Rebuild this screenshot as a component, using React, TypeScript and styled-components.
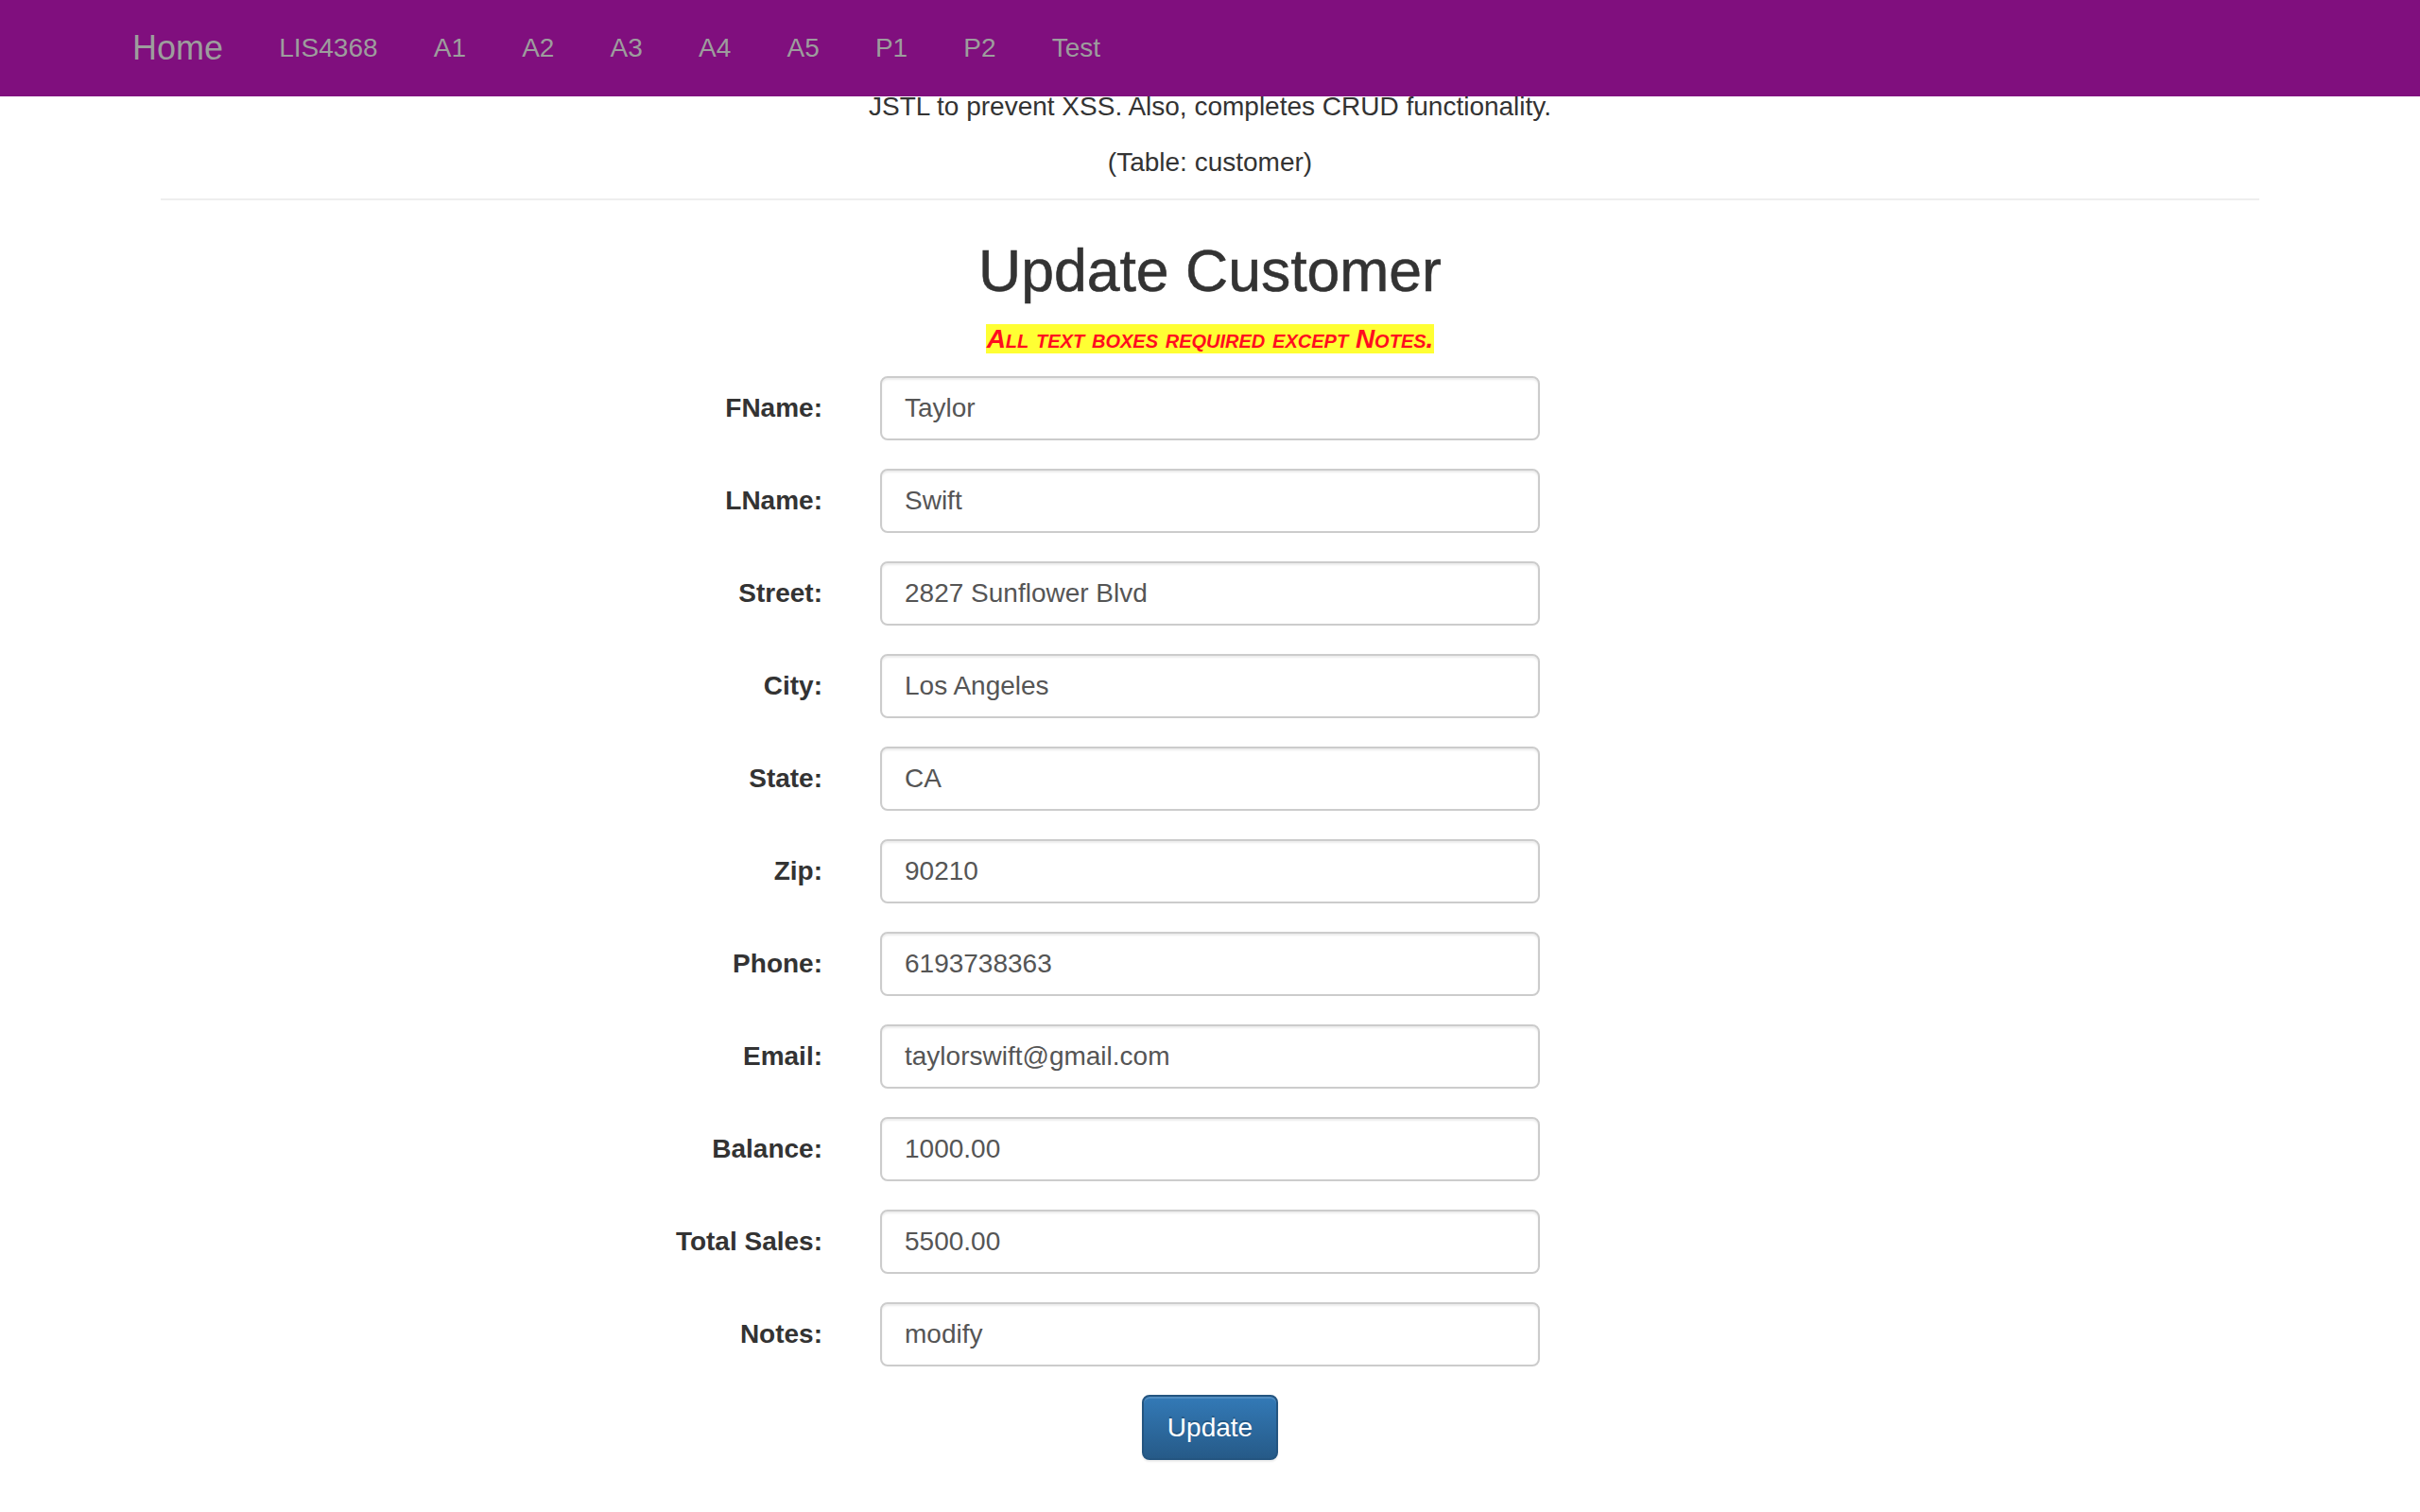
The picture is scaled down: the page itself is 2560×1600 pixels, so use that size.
import React from "react";
import styled, { createGlobalStyle } from "styled-components";

const GlobalStyle = createGlobalStyle`
  html, body { margin: 0; padding: 0; background: #fff; }
  body {
    font-family: "Liberation Sans", Arial, Helvetica, sans-serif;
    font-size: 28px;
    line-height: 40px;
    color: #333;
  }
  * { box-sizing: border-box; }
`;

const NavBar = styled.nav`
  position: fixed;
  top: 0;
  left: 0;
  right: 0;
  height: 102px;
  background: #800f7e;
  z-index: 10;
`;

const NavInner = styled.div`
  display: flex;
  align-items: center;
  height: 100%;
  padding-left: 110px;
`;

const Brand = styled.a`
  font-size: 36px;
  line-height: 40px;
  color: #9d9d9d;
  padding: 0 29.6px 0 30px;
  text-decoration: none;
`;

const NavLink = styled.a`
  font-size: 28px;
  line-height: 40px;
  color: #9d9d9d;
  padding: 0 29.6px;
  text-decoration: none;
`;

const Main = styled.main`
  padding-top: 93px;
  padding-bottom: 60px;
`;

const Container = styled.div`
  width: 2220px;
  margin: 0 auto;
`;

const Intro = styled.p<{ $gap: number }>`
  margin: 0 0 ${(p) => p.$gap}px;
  text-align: center;
  font-size: 28px;
  line-height: 40px;
`;

const Rule = styled.hr`
  margin: 0;
  border: 0;
  border-top: 2px solid #eee;
`;

const Title = styled.h2`
  margin: 41px 0 0;
  text-align: center;
  font-size: 62.5px;
  line-height: 66px;
  font-weight: 500;
  color: #333;
  -webkit-text-stroke: 0.6px #333;
`;

const NoticeLine = styled.p`
  margin: 20px 0 0;
  text-align: center;
  line-height: 40px;
`;

const Notice = styled.span`
  background: #ffff33;
  color: #ff0d1f;
  font-weight: bold;
  font-style: italic;
  font-variant: small-caps;
  font-size: 28px;
  padding: 0 1px;
`;

const Form = styled.form`
  margin-top: 19px;
  display: flex;
  flex-direction: column;
  gap: 30px;
`;

const Row = styled.div`
  display: grid;
  grid-template-columns: 1fr 698px 1fr;
  align-items: center;
`;

const Label = styled.label`
  text-align: right;
  font-weight: bold;
  font-size: 28px;
  padding-right: 61px;
  color: #333;
`;

const Input = styled.input`
  width: 698px;
  height: 68px;
  padding: 12px 24px;
  font-family: "Liberation Sans", Arial, Helvetica, sans-serif;
  font-size: 28px;
  color: #555;
  background: #fff;
  border: 2px solid #ccc;
  border-radius: 8px;
  box-shadow: inset 0 2px 2px rgba(0, 0, 0, 0.075);
  outline: none;
`;

const ButtonRow = styled.div`
  display: flex;
  justify-content: center;
`;

const Button = styled.button`
  height: 69px;
  padding: 12px 25px;
  font-family: "Liberation Sans", Arial, Helvetica, sans-serif;
  font-size: 28px;
  line-height: 40px;
  color: #fff;
  background-image: linear-gradient(to bottom, #337ab7 0, #265a88 100%);
  border: 2px solid #245580;
  border-radius: 8px;
  text-shadow: 0 -2px 0 rgba(0, 0, 0, 0.2);
  box-shadow: inset 0 2px 0 rgba(255, 255, 255, 0.15), 0 2px 2px rgba(0, 0, 0, 0.075);
  cursor: pointer;
`;

const fields: [string, string][] = [
  ["FName:", "Taylor"],
  ["LName:", "Swift"],
  ["Street:", "2827 Sunflower Blvd"],
  ["City:", "Los Angeles"],
  ["State:", "CA"],
  ["Zip:", "90210"],
  ["Phone:", "6193738363"],
  ["Email:", "taylorswift@gmail.com"],
  ["Balance:", "1000.00"],
  ["Total Sales:", "5500.00"],
  ["Notes:", "modify"],
];

const navItems = ["LIS4368", "A1", "A2", "A3", "A4", "A5", "P1", "P2", "Test"];

export default function App() {
  return (
    <>
      <GlobalStyle />
      <NavBar>
        <NavInner>
          <Brand href="#">Home</Brand>
          {navItems.map((n) => (
            <NavLink key={n} href="#">
              {n}
            </NavLink>
          ))}
        </NavInner>
      </NavBar>
      <Main>
        <Container>
          <Intro $gap={19}>JSTL to prevent XSS. Also, completes CRUD functionality.</Intro>
          <Intro $gap={18}>(Table: customer)</Intro>
          <Rule />
          <Title>Update Customer</Title>
          <NoticeLine>
            <Notice>All text boxes required except Notes.</Notice>
          </NoticeLine>
          <Form onSubmit={(e) => e.preventDefault()}>
            {fields.map(([label, value], i) => (
              <Row key={label}>
                <Label htmlFor={`f${i}`}>{label}</Label>
                <Input id={`f${i}`} type="text" defaultValue={value} />
                <span />
              </Row>
            ))}
            <ButtonRow>
              <Button type="submit">Update</Button>
            </ButtonRow>
          </Form>
        </Container>
      </Main>
    </>
  );
}
